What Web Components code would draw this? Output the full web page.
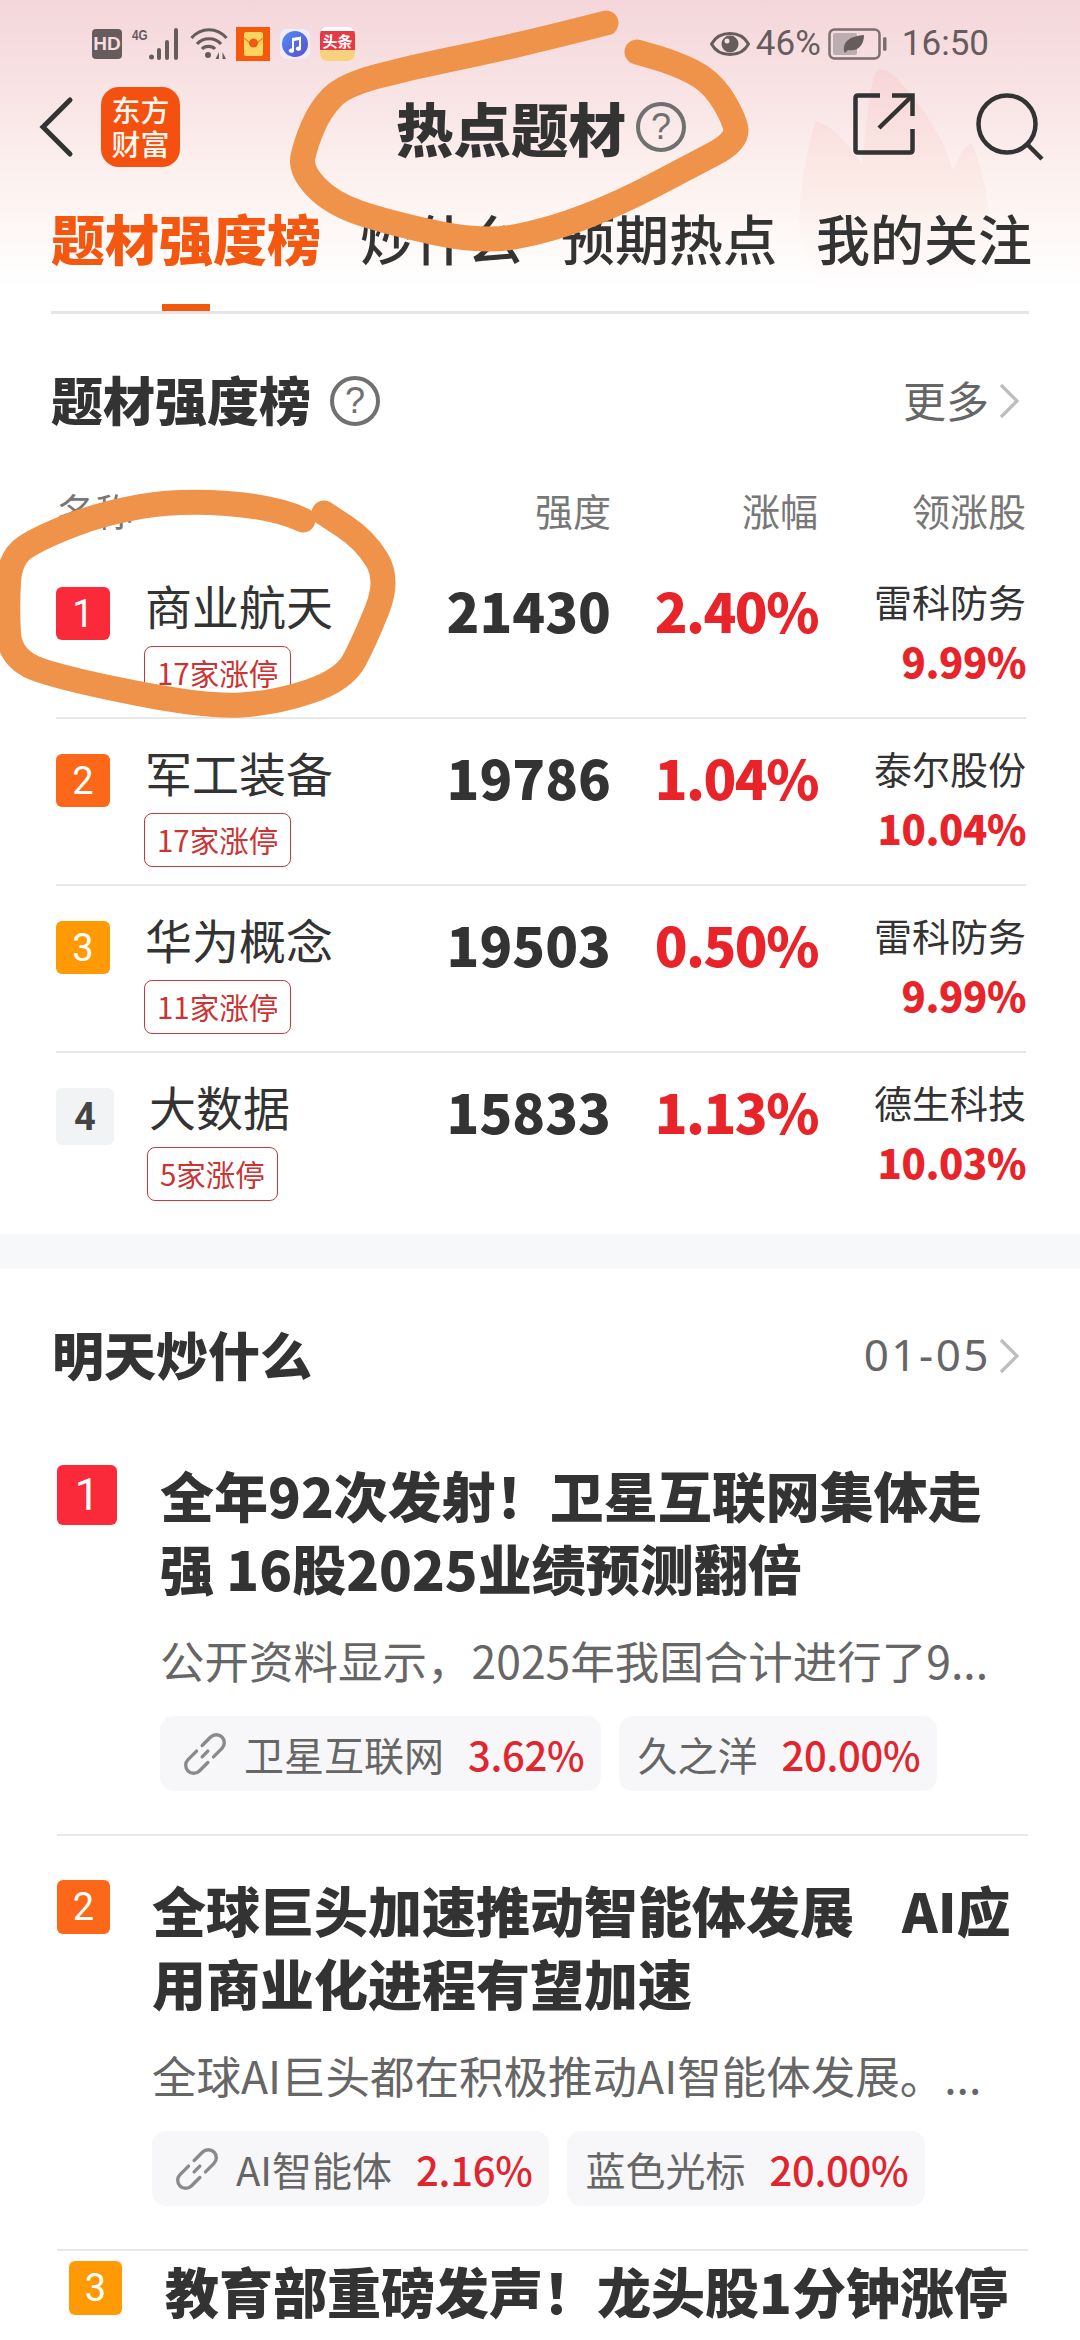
<!DOCTYPE html>
<html lang="zh">
<head>
<meta charset="utf-8">
<title>热点题材</title>
<style>
  html, body { margin: 0; padding: 0; background: #fff; }
  body {
    position: relative;
    width: 1080px;
    height: 2340px;
    overflow: hidden;
    font-family: "Noto Sans CJK SC", "Noto Sans", sans-serif;
    color: #333;
  }
</style>
</head>
<body>
  <hot-top>
    <status-bar></status-bar>
    <app-bar>热点题材</app-bar>
    <tab-strip>
      <tab-item active>题材强度榜</tab-item>
      <tab-item>炒什么</tab-item>
      <tab-item>预期热点</tab-item>
      <tab-item>我的关注</tab-item>
    </tab-strip>
  </hot-top>

  <rank-card>
    <rank-row n="1">
      <span slot="name">商业航天</span><span slot="tag">17家涨停</span>
      <span slot="score">21430</span><span slot="pct">2.40%</span>
      <span slot="stock">雷科防务</span><span slot="stock-pct">9.99%</span>
    </rank-row>
    <rank-row n="2">
      <span slot="name">军工装备</span><span slot="tag">17家涨停</span>
      <span slot="score">19786</span><span slot="pct">1.04%</span>
      <span slot="stock">泰尔股份</span><span slot="stock-pct">10.04%</span>
    </rank-row>
    <rank-row n="3">
      <span slot="name">华为概念</span><span slot="tag">11家涨停</span>
      <span slot="score">19503</span><span slot="pct">0.50%</span>
      <span slot="stock">雷科防务</span><span slot="stock-pct">9.99%</span>
    </rank-row>
    <rank-row n="4" last>
      <span slot="name">大数据</span><span slot="tag">5家涨停</span>
      <span slot="score">15833</span><span slot="pct">1.13%</span>
      <span slot="stock">德生科技</span><span slot="stock-pct">10.03%</span>
    </rank-row>
  </rank-card>

  <news-card>
    <news-item n="1" style="--title-x:43px;--rank-size:60px;--rank-font:44px;--pad-top:0px">
      <span slot="title">全年92次发射！卫星互联网集体走<br>强 16股2025业绩预测翻倍</span>
      <span slot="desc">公开资料显示，2025年我国合计进行了9...</span>
      <stock-chip link pct="3.62%">卫星互联网</stock-chip>
      <stock-chip pct="20.00%">久之洋</stock-chip>
    </news-item>
    <news-item n="2" style="--pad-top:40px">
      <span slot="title">全球巨头加速推动智能体发展<span style="display:inline-block;width:48px"></span>AI应<br>用商业化进程有望加速</span>
      <span slot="desc">全球AI巨头都在积极推动AI智能体发展。...</span>
      <stock-chip link pct="2.16%">AI智能体</stock-chip>
      <stock-chip pct="20.00%">蓝色光标</stock-chip>
    </news-item>
    <news-item n="3" style="--pad-top:6px;--rank-x:69px;--title-x:43px">
      <span slot="title">教育部重磅发声！龙头股1分钟涨停</span>
    </news-item>
  </news-card>

  <pen-marks></pen-marks>

<script>
const RANK_COLORS = {1: '#fb2a3b', 2: '#fd6719', 3: '#ff9a05'};

// every element below is just markup + styles in an open shadow root
class Base extends HTMLElement {
  connectedCallback () {
    if (this.shadowRoot) return;
    const tpl = document.createElement('template');
    tpl.innerHTML = this.render();
    this.attachShadow({mode: 'open'}).appendChild(tpl.content.cloneNode(true));
  }
}

class HelpIcon extends Base {
  render () {
    return `<style>
      :host { display: inline-flex; width: 50px; height: 50px; box-sizing: border-box; border: 4.5px solid #707070;
        border-radius: 50%; align-items: center; justify-content: center; color: #707070;
        font: 400 36px/1 "Liberation Sans", sans-serif; }
    </style>?`;
  }
}

class MoreArrow extends Base {
  render () {
    return `<style>:host { display: inline-flex; } svg { display: block; }</style>
      <svg width="22" height="36" viewBox="0 0 22 36" fill="none" stroke="#bdbdbd" stroke-width="3.2">
        <path d="M3 2 L19 18 L3 34"/></svg>`;
  }
}

class RankBadge extends Base {
  render () {
    const n = this.getAttribute('n');
    const bg = RANK_COLORS[n] || '#f2f3f5';
    const fg = RANK_COLORS[n] ? '#fff' : '#444';
    const weight = RANK_COLORS[n] ? 400 : 700;
    return `<style>
      :host { display: flex; align-items: center; justify-content: center; flex: none;
        width: var(--w, 54px); height: var(--h, 53px); border-radius: 6px; background: ${bg}; color: ${fg};
        font: ${weight} var(--rank-font, 38px)/1 Roboto, sans-serif; }
    </style>${n}`;
  }
}

class StatusBar extends Base {
  render () {
    return `<style>
      :host { display: flex; align-items: center; height: 87px; box-sizing: border-box; padding: 0 91px 0 92px;
        color: #665c5e; font: 400 35px/1 Roboto, sans-serif; }
      svg { display: block; flex: none; }
      .left { display: flex; align-items: center; flex: 1; }
      .right { display: flex; align-items: center; }
      .hd { width: 30px; height: 30px; background: #665c5e; border-radius: 4px; color: #f6dde0; font: 700 19px/30px "Liberation Sans", sans-serif; text-align: center; }
      .net { position: relative; width: 50px; height: 32px; margin-left: 10px; }
      .net b { position: absolute; left: 0; top: -1px; font: 700 15px/15px "Liberation Sans Narrow", "Liberation Sans", sans-serif; transform: scaleX(.78); transform-origin: left; }
      .net svg { position: absolute; left: 17px; top: 0; }
      .packet { position: relative; width: 34px; height: 34px; background: #f55a0c; margin-left: 8px; }
      .tt { position: relative; width: 35px; height: 34px; margin-left: 10px; border-radius: 7px; background: #fff; overflow: hidden; }
      .tt b { position: absolute; left: 0; right: 0; top: 4px; height: 19px; background: #e63946; color: #fff; font: 700 15px/19px "Noto Sans CJK SC", sans-serif; text-align: center; }
      .tt i { position: absolute; left: 0; right: 0; bottom: 0; height: 11px; background: #f6d27e; }
      .pct { margin-left: 6px; }
      .time { margin-left: 14px; }
    </style>
    <div class="left">
      <div class="hd">HD</div>
      <div class="net"><b>4G</b>
        <svg width="33" height="32" viewBox="0 0 33 32" fill="#665c5e">
          <circle cx="2.5" cy="29" r="2.5"/><rect x="8" y="20" width="4" height="12" rx="2"/>
          <rect x="16" y="12" width="4" height="20" rx="2"/><rect x="25" y="0" width="4" height="32" rx="2"/>
        </svg>
      </div>
      <svg style="margin-left:8px" width="38" height="32" viewBox="0 0 38 32" fill="none" stroke="#665c5e" stroke-width="3.2">
        <path d="M1.5 10 C 11 -1 27 -1 36.5 10"/><path d="M7 16 C 13 9 25 9 31 16"/><path d="M12 21 C 15 17.5 22 17.5 25 21"/>
        <circle cx="18" cy="27" r="3" fill="#665c5e" stroke="none"/>
        <path d="M29 24 L25.5 31 H29 Z M32.5 24 V31 M32.5 24 L36 31 H32.5" fill="#665c5e" stroke="none"/>
      </svg>
      <div class="packet">
        <svg width="34" height="34" viewBox="0 0 34 34">
          <rect x="8" y="5" width="19" height="24" rx="2" fill="#fdd45f"/>
          <path d="M8 11 L17.5 19 L27 11" fill="none" stroke="#e8901f" stroke-width="1.4"/>
          <circle cx="17.5" cy="16" r="4.5" fill="#ef5a14"/>
        </svg>
      </div>
      <svg style="margin-left:10px" width="30" height="30" viewBox="0 0 30 30">
        <rect width="30" height="30" rx="7" fill="#f0ecfb"/>
        <defs><linearGradient id="mu" x1="0" y1="0" x2="1" y2="1"><stop offset="0" stop-color="#4f8cf2"/><stop offset="1" stop-color="#5a4fd0"/></linearGradient></defs>
        <circle cx="15" cy="15" r="13" fill="url(#mu)"/>
        <path d="M12 9 L21 7.5 V19.5 A2.6 2.2 0 1 1 19 17.5 V11 L14 12 V21.5 A2.6 2.2 0 1 1 12 19.5 Z" fill="#fff"/>
      </svg>
      <div class="tt"><b>头条</b><i></i></div>
    </div>
    <div class="right">
      <svg width="40" height="26" viewBox="0 0 40 26">
        <path d="M1.5 13 C 9 -1 31 -1 38.5 13 C 31 27 9 27 1.5 13 Z" fill="none" stroke="#665c5e" stroke-width="3"/>
        <circle cx="20" cy="13" r="8.5" fill="#665c5e"/><circle cx="17" cy="10" r="2.5" fill="#f6dde0"/>
      </svg>
      <span class="pct">46%</span>
      <svg style="margin-left:7px" width="60" height="32" viewBox="0 0 60 32">
        <rect x="1.5" y="1.5" width="50" height="29" rx="5" fill="none" stroke="#7b6f71" stroke-width="2.5"/>
        <rect x="5" y="5" width="24" height="22" rx="2" fill="#bcaeb0"/>
        <path d="M16 23 C 15 12 24 8 36 7 C 36 17 30 24 20 22 L 17 25 Z" fill="#665c5e"/>
        <rect x="55" y="9" width="3.5" height="14" rx="1.7" fill="#7b6f71"/>
      </svg>
      <span class="time">16:50</span>
    </div>`;
  }
}

class AppBar extends Base {
  render () {
    return `<style>
      :host { display: flex; align-items: center; height: 80px; position: relative; }
      svg { display: block; flex: none; }
      .logo { width: 79px; height: 80px; margin-left: 27px; border-radius: 18px; background: #f4500f; color: #fff6ee;
        font: 500 29px/34px "Noto Sans CJK SC", sans-serif; text-align: center; padding-top: 5px; box-sizing: border-box; flex: none; }
      .title { margin: 0 0 0 216px; font: 900 57.5px/64px "Noto Sans CJK SC", sans-serif; color: #333; white-space: nowrap; }
      help-icon { margin: 0 0 0 10px; }
      .spacer { flex: 1; }
    </style>
    <svg style="margin-left:37px" width="37" height="62" viewBox="0 0 37 62" fill="none" stroke="#333" stroke-width="5" stroke-linecap="round">
      <path d="M33 4 L6 31 L33 58"/></svg>
    <div class="logo">东方<br>财富</div>
    <div class="title"><slot></slot></div>
    <help-icon></help-icon>
    <div class="spacer"></div>
    <svg style="margin-bottom:6px" width="62" height="62" viewBox="0 0 62 62" fill="none" stroke="#333" stroke-width="4.5">
      <path d="M27 2.5 H5 Q2.5 2.5 2.5 5 V57 Q2.5 59.5 5 59.5 H57 Q59.5 59.5 59.5 57 V36"/>
      <path d="M39 2.5 H59.5 V23"/><path d="M59 3 L26 35"/></svg>
    <svg style="margin:0 36px 0 61px" width="68" height="68" viewBox="0 0 68 68" fill="none" stroke="#333" stroke-width="4.5">
      <circle cx="31" cy="31" r="28.5"/><path d="M52 52 L66 66"/></svg>`;
  }
}

class TabStrip extends Base {
  render () {
    return `<style>
      :host { display: flex; gap: 39px; height: 147px; box-sizing: border-box; margin: 0 51px; border-bottom: 3px solid #e5e5e5; }
    </style><slot></slot>`;
  }
}

class TabItem extends Base {
  render () {
    const on = this.hasAttribute('active');
    return `<style>
      :host { display: block; position: relative; padding-top: 39px; color: ${on ? '#f4570f' : '#333'};
        font: ${on ? 900 : 500} 54px/64px "Noto Sans CJK SC", sans-serif; white-space: nowrap; }
      i { position: absolute; left: 50%; margin-left: -24px; bottom: 0; width: 48px; height: 7px; background: #f0590f; }
    </style><slot></slot>${on ? '<i></i>' : ''}`;
  }
}

class HotTop extends Base {
  render () {
    return `<style>
      :host { display: block; position: relative; height: 314px; overflow: hidden;
        background: linear-gradient(#f4d6da 0, #f8e3e5 90px, #fcf0ee 170px, #fff 290px); }
      svg { position: absolute; left: 0; top: 0; }
      .top { position: relative; }
    </style>
    <svg width="1080" height="314">
      <defs><linearGradient id="fl" x1="0" y1="0" x2="0" y2="1">
        <stop offset="0" stop-color="#f7c9c9" stop-opacity=".45"/><stop offset=".55" stop-color="#fbe6dd" stop-opacity=".45"/><stop offset="1" stop-color="#fff" stop-opacity="0"/>
      </linearGradient></defs>
      <path fill="url(#fl)" d="M876 72 C884 62 900 80 915 100 C940 130 950 160 953 170 C958 160 965 142 972 143 C990 190 995 240 985 265 C970 295 935 305 895 303 C845 300 805 280 800 235 C797 190 808 150 815 122 C830 122 850 145 862 165 C866 130 868 90 876 72 Z"/>
    </svg>
    <div class="top"><slot></slot></div>`;
  }
}

class RankCard extends Base {
  render () {
    return `<style>
      :host { display: block; background: #fff; height: 920px; box-sizing: border-box; padding-top: 55px; }
      .head { display: flex; align-items: center; height: 60px; margin: 0 60px 0 51px; }
      h2 { margin: 0; font: 900 52px/60px "Noto Sans CJK SC", sans-serif; color: #333; }
      help-icon { margin: 3px 0 0 19px; }
      .more { margin-left: auto; font: 400 43px/60px "Noto Sans CJK SC", sans-serif; color: #666; }
      more-arrow { margin: 3px 0 0 9px; }
      .cols { display: grid; grid-template-columns: 355px 200px 207px 208px; margin: 59px 0 20px 56px; height: 44px;
        font: 400 38px/44px "Noto Sans CJK SC", sans-serif; color: #777; }
      .cols span { text-align: right; }
      .cols span:first-child { text-align: left; padding-left: 1px; }
    </style>
    <div class="head"><h2>题材强度榜</h2><help-icon></help-icon><span class="more">更多</span><more-arrow></more-arrow></div>
    <div class="cols"><span>名称</span><span>强度</span><span>涨幅</span><span>领涨股</span></div>
    <slot></slot>`;
  }
}

class RankRow extends Base {
  render () {
    const n = this.getAttribute('n');
    const last = this.hasAttribute('last');
    return `<style>
      :host { display: grid; grid-template-columns: 355px 200px 207px 208px; height: 167px; box-sizing: border-box;
        margin: 0 54px 0 56px; ${last ? '' : 'border-bottom: 2px solid #e8e8e8;'} }
      .name { display: flex; align-items: flex-start; gap: 35px; padding-top: 25px; }
      rank-badge { margin-top: 10px; ${n === '4' ? '--w:58px;--h:57px;' : ''} }
      .nm { font: 400 47px/56px "Noto Sans CJK SC", sans-serif; color: #333; white-space: nowrap; }
      .tag { display: inline-block; margin: 13px 0 0 ${n === '4' ? -2 : -1}px; height: 54px; box-sizing: border-box; padding: 0 12px;
        border: 1.5px solid #c9393c; border-radius: 8px; color: #cc3333; font: 400 29.5px/50px "Noto Sans CJK SC", sans-serif; white-space: nowrap; }
      .num { padding-top: 28px; text-align: right; font: 900 54px/60px "Noto Sans CJK SC", sans-serif; color: #333; }
      .up { color: #e8242a; letter-spacing: -1.5px; }
      .stock { padding-top: 24px; text-align: right; }
      .sn { font: 400 38px/50px "Noto Sans CJK SC", sans-serif; color: #333; white-space: nowrap; }
      .sp { margin-top: 10px; font: 900 40px/50px "Noto Sans CJK SC", sans-serif; color: #e8242a; letter-spacing: -.4px; }
    </style>
    <div class="name"><rank-badge n="${n}"></rank-badge>
      <div><div class="nm"><slot name="name"></slot></div><div class="tag"><slot name="tag"></slot></div></div></div>
    <div class="num"><slot name="score"></slot></div>
    <div class="num up"><slot name="pct"></slot></div>
    <div class="stock"><div class="sn"><slot name="stock"></slot></div><div class="sp"><slot name="stock-pct"></slot></div></div>`;
  }
}

class NewsCard extends Base {
  render () {
    return `<style>
      :host { display: block; border-top: 35px solid #f7f8fa; padding-top: 55px; background: #fff; position: relative; }
      .head { display: flex; align-items: center; height: 60px; margin: 0 60px 77px 52px; }
      h2 { margin: 0; font: 900 52px/60px "Noto Sans CJK SC", sans-serif; color: #333; }
      .date { margin-left: auto; font: 400 44px/60px "Noto Sans", sans-serif; letter-spacing: 2.5px; color: #666; }
      more-arrow { margin: 3px 0 0 7px; }
    </style>
    <div class="head"><h2>明天炒什么</h2><span class="date">01-05</span><more-arrow></more-arrow></div>
    <slot></slot>`;
  }
}

class NewsItem extends Base {
  render () {
    const n = this.getAttribute('n');
    return `<style>
      :host { display: flex; align-items: flex-start; margin: 0 52px 0 var(--rank-x, 57px); padding: var(--pad-top, 40px) 0 43px;
        border-bottom: 2px solid #e8e8e8; }
      rank-badge { margin-top: 4px; --w: var(--rank-size, 53px); --h: var(--rank-size, 54px); }
      .body { margin: -3px 0 0 var(--title-x, 42px); min-width: 0; }
      .title { font: 900 54px/73px "Noto Sans CJK SC", sans-serif; color: #333; white-space: nowrap; }
      .desc { margin-top: 26px; font: 400 44.5px/60px "Noto Sans CJK SC", sans-serif; color: #666; white-space: nowrap; }
      .chips { display: flex; gap: 18px; margin-top: 26px; }
    </style>
    <rank-badge n="${n}"></rank-badge>
    <div class="body">
      <div class="title"><slot name="title"></slot></div>
      <div class="desc"><slot name="desc"></slot></div>
      <div class="chips"><slot></slot></div>
    </div>`;
  }
}

class StockChip extends Base {
  render () {
    const link = this.hasAttribute('link');
    return `<style>
      :host { display: flex; align-items: center; height: 75px; box-sizing: border-box; padding: 0 17px 0 ${link ? 24 : 18}px;
        background: #f7f7f9; border-radius: 14px; color: #666; font: 400 40px/70px "Noto Sans CJK SC", sans-serif; white-space: nowrap; }
      svg { display: block; margin-right: 18px; overflow: visible; }
      b { margin-left: 24px; font-weight: 500; letter-spacing: -.3px; color: #e1252e; }
    </style>
    ${link ? `<svg width="42" height="42" viewBox="0 0 42 42" fill="none" stroke="#8a8a8a" stroke-width="3.4" stroke-linecap="round">
      <g transform="rotate(45 21 21)"><path d="M13 17 V5 a8 8 0 0 1 16 0 V17"/><path d="M13 25 V37 a8 8 0 0 0 16 0 V25"/><path d="M21 17 V25"/></g></svg>` : ''}
    <slot></slot><b>${this.getAttribute('pct')}</b>`;
  }
}

// the orange hand drawn circles on top of the screenshot
const STROKES = [
  [[606,23],[551,37],[482,53],[413,67],[344,85],[320,110],[306,143],[300,170],[331,203],[386,222],[482,243],[551,230],[620,203],[689,167],[740,140],[730,110],[709,80],[675,63],[637,52]],
  [[303,520],[275,507],[179,500],[103,513],[41,537],[10,557],[7,607],[10,660],[69,680],[207,707],[275,703],[344,680],[365,640],[389,580],[365,540],[324,513]]
];

class PenMarks extends Base {
  render () {
    const paths = STROKES.map((pts) => {
      let d = `M${pts[0]}`;
      for (let i = 1; i < pts.length - 1; i++) {
        const mx = (pts[i][0] + pts[i + 1][0]) / 2;
        const my = (pts[i][1] + pts[i + 1][1]) / 2;
        d += ` Q${pts[i]} ${mx},${my}`;
      }
      d += ` L${pts[pts.length - 1]}`;
      return `<path d="${d}"/>`;
    }).join('');
    return `<style>
      :host { display: block; position: absolute; left: 0; top: 0; width: 1080px; height: 2340px; pointer-events: none; }
    </style>
    <svg width="1080" height="2340" fill="none" stroke="#f0934a" stroke-width="25" stroke-linecap="round" stroke-linejoin="round">${paths}</svg>`;
  }
}

customElements.define('help-icon', HelpIcon);
customElements.define('more-arrow', MoreArrow);
customElements.define('rank-badge', RankBadge);
customElements.define('status-bar', StatusBar);
customElements.define('app-bar', AppBar);
customElements.define('tab-strip', TabStrip);
customElements.define('tab-item', TabItem);
customElements.define('hot-top', HotTop);
customElements.define('rank-card', RankCard);
customElements.define('rank-row', RankRow);
customElements.define('news-card', NewsCard);
customElements.define('news-item', NewsItem);
customElements.define('stock-chip', StockChip);
customElements.define('pen-marks', PenMarks);
</script>
</body>
</html>
